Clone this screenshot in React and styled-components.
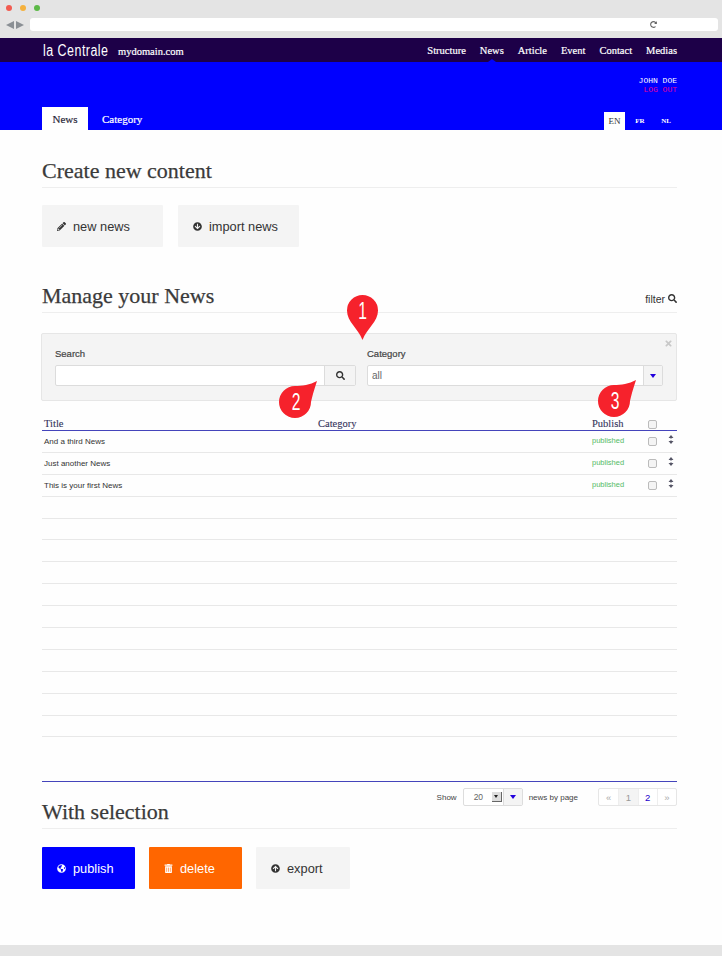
import React from "react";
import styled, { createGlobalStyle } from "styled-components";
import { FaPencilAlt, FaArrowCircleDown, FaArrowCircleUp, FaSearch, FaGlobeAmericas, FaTrashAlt, FaTimes, FaRedoAlt } from "react-icons/fa";

const SERIF = `"Liberation Serif", serif`;
const SANS = `"Liberation Sans", Arial, sans-serif`;
const MONO = `"Liberation Mono", monospace`;

const GlobalStyle = createGlobalStyle`
  html, body {
    margin: 0;
    padding: 0;
    background: #fefefe;
    overflow: hidden;
  }
  * {
    box-sizing: border-box;
  }
`;

const Page = styled.div`
  width: 722px;
  height: 956px;
  display: flex;
  flex-direction: column;
  overflow: hidden;
  font-family: ${SANS};
  color: #333;
`;

const BrowserBar = styled.div`
  height: 38px;
  flex: none;
  background: #e4e4e4;
  padding: 5px 4px 0 6px;
`;

const Lights = styled.div`
  display: flex;
  gap: 8px;
  height: 13px;
  align-items: flex-start;
`;

const Light = styled.span`
  width: 6px;
  height: 6px;
  border-radius: 50%;
  background: ${(p) => p.$color};
`;

const BrowserRow = styled.div`
  display: flex;
  align-items: center;
  gap: 6px;
`;

const NavArrows = styled.div`
  display: flex;
  gap: 2px;
  width: 18px;
`;

const NavArrow = styled.span`
  width: 0;
  height: 0;
  border-top: 4px solid transparent;
  border-bottom: 4px solid transparent;
  ${(p) => (p.$back ? "border-right: 8px solid #8a8f94;" : "border-left: 8px solid #8a8f94;")}
`;

const UrlBar = styled.div`
  flex: 1;
  height: 13px;
  background: #fff;
  border-radius: 3px;
  display: flex;
  align-items: center;
  justify-content: flex-end;
  padding-right: 61px;
  color: #666;
  font-size: 7px;
`;

const TopBar = styled.div`
  height: 24px;
  flex: none;
  background: #1d0048;
  padding: 0 45px 0 43px;
  display: flex;
  align-items: center;
  justify-content: space-between;
  color: #fff;
`;

const Brand = styled.div`
  display: flex;
  align-items: baseline;
  gap: 10px;
`;

const Logo = styled.span`
  display: inline-block;
  width: 65px;
  white-space: nowrap;
  font-size: 16px;
  letter-spacing: 0.6px;
  transform: translateY(1px) scaleX(0.78);
  transform-origin: left center;
`;

const Domain = styled.span`
  font-family: ${SERIF};
  font-size: 10.5px;
  -webkit-text-stroke: 0.2px #fff;
`;

const MainNav = styled.nav`
  display: flex;
  gap: 14px;
`;

const NavLink = styled.a`
  position: relative;
  font-family: ${SERIF};
  font-size: 10.5px;
  -webkit-text-stroke: 0.2px #fff;
  ${(p) =>
    p.$active &&
    `
    &::after {
      content: "";
      position: absolute;
      left: 50%;
      bottom: -6px;
      margin-left: -4px;
      border-left: 4px solid transparent;
      border-right: 4px solid transparent;
      border-bottom: 3px solid #0000ff;
    }
  `}
`;

const BlueBand = styled.div`
  height: 68px;
  flex: none;
  background: #0000ff;
  padding: 14px 45px 0 42px;
  display: flex;
  flex-direction: column;
`;

const UserBox = styled.div`
  align-self: flex-end;
  text-align: right;
  font-family: ${MONO};
  font-size: 8px;
  line-height: 9px;
  color: #fff;
`;

const Logout = styled.div`
  color: #e000a0;
`;

const TabRow = styled.div`
  margin-top: auto;
  display: flex;
  justify-content: space-between;
  align-items: flex-end;
`;

const Tabs = styled.div`
  display: flex;
  gap: 14px;
`;

const Tab = styled.a`
  height: 23px;
  display: flex;
  align-items: center;
  font-family: ${SERIF};
  font-size: 11px;
  ${(p) =>
    p.$active
      ? "width: 46px; justify-content: center; background: #fff; color: #2a2a3a; -webkit-text-stroke: 0.2px #2a2a3a;"
      : "color: #fff; -webkit-text-stroke: 0.2px #fff;"}
`;

const Langs = styled.div`
  display: flex;
`;

const Lang = styled.a`
  width: ${(p) => (p.$active ? "21px" : "26px")};
  height: 18px;
  padding-left: ${(p) => (p.$active ? 0 : 4)}px;
  display: flex;
  align-items: center;
  justify-content: center;
  font-family: ${SERIF};
  font-size: ${(p) => (p.$active ? "9px" : "7px")};
  font-weight: ${(p) => (p.$active ? "normal" : "bold")};
  ${(p) => (p.$active ? "background: #fff; color: #333;" : "color: #fff;")}
`;

const Content = styled.main`
  position: relative;
  flex: 1;
  padding: 0 45px 0 42px;
`;

const SectionHead = styled.div`
  height: ${(p) => p.$height || 35}px;
  margin-top: ${(p) => p.$top || 0}px;
  padding-top: 2px;
  display: flex;
  align-items: center;
  justify-content: space-between;
  border-bottom: 1px solid #eee;
`;

const Heading = styled.h2`
  margin: 0;
  font-family: ${SERIF};
  font-size: 22px;
  font-weight: normal;
  color: #3a3a3a;
  -webkit-text-stroke: 0.25px #3a3a3a;
`;

const ActionRow = styled.div`
  margin-top: ${(p) => p.$top || 17}px;
  display: flex;
  gap: ${(p) => p.$gap}px;
`;

const tones = {
  plain: "background: #f4f4f4; color: #333;",
  blue: "background: #0000ff; color: #fff;",
  orange: "background: #ff6600; color: #fff;",
};

const ActionButton = styled.a`
  width: ${(p) => p.$width}px;
  height: 42px;
  padding-left: 15px;
  display: flex;
  align-items: center;
  gap: 7px;
  border-radius: 1px;
  font-size: 12.8px;
  ${(p) => tones[p.$tone || "plain"]}
  svg {
    font-size: 9px;
    width: 9px;
  }
`;

const FilterLink = styled.a`
  display: flex;
  align-items: center;
  gap: 3px;
  font-size: 10.5px;
  margin-top: 6px;
  svg {
    font-size: 9px;
  }
`;

const FilterPanel = styled.div`
  position: relative;
  margin: 20px 0 0 -1px;
  height: 68px;
  padding: 13px 13px 0;
  background: #f4f4f4;
  border: 1px solid #e6e6e6;
  border-radius: 2px;
  display: grid;
  grid-template-columns: 301px 296px;
  gap: 11px;
`;

const CloseMark = styled.span`
  position: absolute;
  top: 5px;
  right: 3px;
  color: #c8c8c8;
  font-size: 9px;
`;

const FieldLabel = styled.label`
  display: block;
  height: 18px;
  font-size: 9.5px;
  color: #444;
  line-height: 13px;
  -webkit-text-stroke: 0.2px #444;
`;

const InputGroup = styled.div`
  height: 21px;
  display: flex;
  background: #fff;
  border: 1px solid #dcdcdc;
  border-radius: 2px;
`;

const InputValue = styled.span`
  flex: 1;
  padding-left: 4px;
  font-size: 10px;
  line-height: 20px;
  color: #666;
`;

const GroupButton = styled.span`
  width: ${(p) => p.$width}px;
  background: #f4f4f4;
  border-left: 1px solid #dcdcdc;
  display: flex;
  align-items: center;
  justify-content: center;
  color: #333;
  font-size: 9px;
`;

const DownCaret = styled.span`
  width: 0;
  height: 0;
  border-left: 3.5px solid transparent;
  border-right: 3.5px solid transparent;
  border-top: 4px solid #2200dd;
`;

const TableHead = styled.div`
  height: 30px;
  display: grid;
  grid-template-columns: 276px 274px 56px 28px 1fr;
  align-items: end;
  padding-bottom: 1px;
  border-bottom: 1px solid #4444bb;
  font-family: ${SERIF};
  font-size: 10.5px;
  color: #33335a;
  -webkit-text-stroke: 0.1px #33335a;
`;

const TableRow = styled.div`
  height: 21.9px;
  display: grid;
  grid-template-columns: 276px 274px 56px 22px 1fr;
  align-items: center;
  border-bottom: 1px solid #e8e8e8;
  font-size: 8px;
  color: #333;
`;

const TitleCell = styled.span`
  padding-left: 2px;
`;

const Status = styled.span`
  font-size: 7.5px;
  margin-top: -2px;
  color: #55bb66;
`;

const Check = styled.input.attrs({ type: "checkbox" })`
  appearance: none;
  display: block;
  margin: 1px 0 0;
  width: 9px;
  height: 9px;
  border: 1px solid #bbb;
  border-radius: 2px;
  background: #f4f4f4;
`;

const SortIcon = styled.svg`
  display: block;
  margin: -3px 0 0 -2px;
`;

const SelectionBar = styled.div`
  margin-top: 44px;
  border-top: 1px solid #4444bb;
  height: 48px;
  display: flex;
  justify-content: space-between;
  align-items: flex-end;
  border-bottom: 1px solid #eee;
  padding-bottom: 3px;
  position: relative;
`;

const PagerTools = styled.div`
  align-self: flex-start;
  margin-top: 6px;
  display: flex;
  align-items: center;
  font-size: 8px;
  color: #444;
`;

const PerPage = styled.div`
  margin-left: 6px;
  width: 60px;
  height: 18px;
  display: flex;
  background: #fff;
  border: 1px solid #ddd;
  border-radius: 2px;
`;

const PerPageValue = styled.span`
  flex: 1;
  display: flex;
  align-items: center;
  justify-content: space-between;
  padding: 0 1px 0 10px;
  color: #666;
  font-size: 8.5px;
`;

const Stepper = styled.span`
  width: 10px;
  height: 10px;
  display: flex;
  align-items: center;
  justify-content: center;
  background: #ddd;
  border-right: 1px solid #666;
  border-bottom: 1px solid #666;
  &::after {
    content: "";
    border-left: 2px solid transparent;
    border-right: 2px solid transparent;
    border-top: 3px solid #222;
  }
`;

const PerPageLabel = styled.span`
  margin: 0 20px 0 6px;
`;

const Pagination = styled.div`
  display: flex;
  height: 18px;
  border: 1px solid #e6e6e6;
  border-radius: 2px;
  background: #fff;
`;

const PageCell = styled.a`
  width: 19.25px;
  display: flex;
  align-items: center;
  justify-content: center;
  font-size: 9.5px;
  border-left: 1px solid #eee;
  &:first-child {
    border-left: 0;
  }
  ${(p) => p.$muted && "color: #aaa;"}
  ${(p) => p.$current && "background: #f4f4f4; color: #999;"}
  ${(p) => p.$link && "color: #2200cc;"}
`;

const Footer = styled.div`
  height: 11px;
  flex: none;
  background: #e4e4e4;
`;

const PinWrap = styled.div`
  position: absolute;
  left: ${(p) => p.$x}px;
  top: ${(p) => p.$y}px;
  width: ${(p) => p.$w}px;
  height: ${(p) => p.$h}px;
  svg {
    display: block;
  }
`;

const PinNumber = styled.span`
  position: absolute;
  left: 0;
  top: ${(p) => p.$top}px;
  width: ${(p) => p.$textWidth}px;
  text-align: center;
  color: #fff;
  font-family: ${SANS};
  font-size: 23px;
  line-height: 24px;
  transform: scaleX(0.68);
`;

const Pin = ({ n, x, y, corner }) =>
  corner ? (
    <PinWrap $x={x} $y={y} $w={38} $h={37}>
      <svg width="38" height="37" viewBox="0 0 38 37">
        <path d="M38 0C35 9 33 16 32 21A16 16 0 1 1 16 5C23 5 31 4 38 0Z" fill="#f6222c" />
      </svg>
      <PinNumber $top={9} $textWidth={34}>{n}</PinNumber>
    </PinWrap>
  ) : (
    <PinWrap $x={x} $y={y} $w={31} $h={45}>
      <svg width="31" height="45" viewBox="0 0 31 45">
        <path d="M15.5 45C11 33 0 27 0 15.5A15.5 15.5 0 1 1 31 15.5C31 27 20 33 15.5 45Z" fill="#f6222c" />
      </svg>
      <PinNumber $top={4} $textWidth={31}>{n}</PinNumber>
    </PinWrap>
  );

const SortArrows = () => (
  <SortIcon width="6" height="9" viewBox="0 0 6 9" fill="#556">
    <path d="M3 0L5.5 3H3.7V3.6H2.3V3H.5Z" />
    <path d="M3 9L.5 6H2.3V5.4H3.7V6H5.5Z" />
  </SortIcon>
);

const news = ["And a third News", "Just another News", "This is your first News"];
const blankRows = Array.from({ length: 11 });

const App = () => (
  <Page>
    <GlobalStyle />
    <BrowserBar>
      <Lights>
        <Light $color="#f25b50" />
        <Light $color="#f5b13d" />
        <Light $color="#5cb947" />
      </Lights>
      <BrowserRow>
        <NavArrows>
          <NavArrow $back />
          <NavArrow />
        </NavArrows>
        <UrlBar>
          <FaRedoAlt />
        </UrlBar>
      </BrowserRow>
    </BrowserBar>
    <TopBar>
      <Brand>
        <Logo>la Centrale</Logo>
        <Domain>mydomain.com</Domain>
      </Brand>
      <MainNav>
        <NavLink>Structure</NavLink>
        <NavLink $active>News</NavLink>
        <NavLink>Article</NavLink>
        <NavLink>Event</NavLink>
        <NavLink>Contact</NavLink>
        <NavLink>Medias</NavLink>
      </MainNav>
    </TopBar>
    <BlueBand>
      <UserBox>
        <div>JOHN DOE</div>
        <Logout>LOG OUT</Logout>
      </UserBox>
      <TabRow>
        <Tabs>
          <Tab $active>News</Tab>
          <Tab>Category</Tab>
        </Tabs>
        <Langs>
          <Lang $active>EN</Lang>
          <Lang>FR</Lang>
          <Lang>NL</Lang>
        </Langs>
      </TabRow>
    </BlueBand>
    <Content>
      <SectionHead $top={23}>
        <Heading>Create new content</Heading>
      </SectionHead>
      <ActionRow $gap={15}>
        <ActionButton $width={121}>
          <FaPencilAlt />
          new news
        </ActionButton>
        <ActionButton $width={121}>
          <FaArrowCircleDown />
          import news
        </ActionButton>
      </ActionRow>
      <SectionHead $top={30} $height={36}>
        <Heading>Manage your News</Heading>
        <FilterLink>
          filter <FaSearch />
        </FilterLink>
      </SectionHead>
      <FilterPanel>
        <CloseMark>
          <FaTimes />
        </CloseMark>
        <div>
          <FieldLabel>Search</FieldLabel>
          <InputGroup>
            <InputValue />
            <GroupButton $width={31}>
              <FaSearch />
            </GroupButton>
          </InputGroup>
        </div>
        <div>
          <FieldLabel>Category</FieldLabel>
          <InputGroup>
            <InputValue>all</InputValue>
            <GroupButton $width={19}>
              <DownCaret />
            </GroupButton>
          </InputGroup>
        </div>
      </FilterPanel>
      <TableHead>
        <TitleCell>Title</TitleCell>
        <span>Category</span>
        <span>Publish</span>
        <span>
          <Check readOnly />
        </span>
      </TableHead>
      {news.map((title) => (
        <TableRow key={title}>
          <TitleCell>{title}</TitleCell>
          <span />
          <Status>published</Status>
          <Check readOnly />
          <SortArrows />
        </TableRow>
      ))}
      {blankRows.map((_, i) => (
        <TableRow key={i} />
      ))}
      <SelectionBar>
        <Heading>With selection</Heading>
        <PagerTools>
          Show
          <PerPage>
            <PerPageValue>
              20
              <Stepper />
            </PerPageValue>
            <GroupButton $width={19}>
              <DownCaret />
            </GroupButton>
          </PerPage>
          <PerPageLabel>news by page</PerPageLabel>
          <Pagination>
            <PageCell $muted>«</PageCell>
            <PageCell $current>1</PageCell>
            <PageCell $link>2</PageCell>
            <PageCell $muted>»</PageCell>
          </Pagination>
        </PagerTools>
      </SelectionBar>
      <ActionRow $gap={14} $top={18}>
        <ActionButton $width={93} $tone="blue">
          <FaGlobeAmericas />
          publish
        </ActionButton>
        <ActionButton $width={93} $tone="orange">
          <FaTrashAlt />
          delete
        </ActionButton>
        <ActionButton $width={94}>
          <FaArrowCircleUp />
          export
        </ActionButton>
      </ActionRow>
      <Pin n="1" x={347} y={165} />
      <Pin n="2" x={279} y={251} corner />
      <Pin n="3" x={598} y={250} corner />
    </Content>
    <Footer />
  </Page>
);

export default App;
